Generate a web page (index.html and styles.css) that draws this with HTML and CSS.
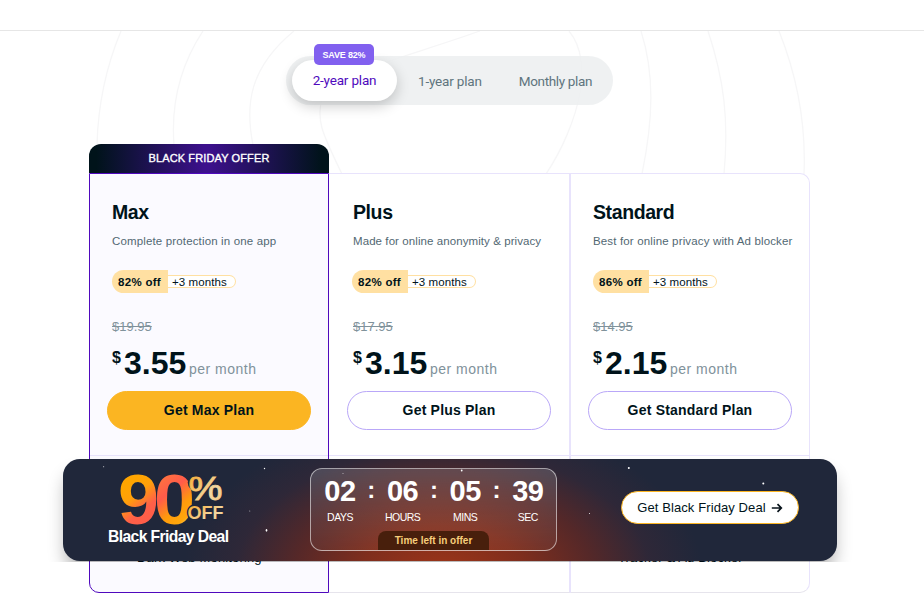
FILE: index.html
```html
<!DOCTYPE html>
<html lang="en">
<head>
<meta charset="utf-8">
<title>Plans</title>
<link rel="stylesheet" href="styles.css">
</head>
<body>
<header class="topbar"></header>
<main class="pricing">
  <svg class="waves" width="924" height="143" viewBox="0 31 924 143" fill="none" stroke="#f6f6f7" stroke-width="1.3">
    <path d="M121 31C106 67 98 105 97 145"/>
    <path d="M203 31C178 69 171 106 174 145"/>
    <path d="M294 31C249 68 245 105 253 145"/>
    <path d="M480 31C410 56 340 72 323 94C315 119 322 133 342 174"/>
    <path d="M569 31C583 48 583 70 580 93C575 120 562 150 546 174"/>
    <path d="M641 31C655 75 653 120 642 174"/>
    <path d="M708 31C724 79 729 120 724 174"/>
    <path d="M779 31C799 81 806 127 804 174"/>
  </svg>
  <nav class="tabs">
    <a class="tab tab-active"><span class="save">SAVE 82%</span>2-year plan</a>
    <a class="tab tab-year">1-year plan</a>
    <a class="tab tab-month">Monthly plan</a>
  </nav>
  <div class="ribbon">BLACK FRIDAY OFFER</div>
  <section class="plans">
    <article class="plan plan-max">
      <div class="offer">
        <h2>Max</h2>
        <p class="desc">Complete protection in one app</p>
        <div class="promo"><b>82% off</b><span>+3 months</span></div>
        <s>$19.95</s>
        <div class="price"><sup>$</sup><strong>3.55</strong><span>per month</span></div>
        <a class="buy buy-main">Get Max Plan</a>
      </div>
      <div class="features"><i></i><span>Dark Web Monitoring</span></div>
    </article>
    <article class="plan">
      <div class="offer">
        <h2>Plus</h2>
        <p class="desc">Made for online anonymity &amp; privacy</p>
        <div class="promo"><b>82% off</b><span>+3 months</span></div>
        <s>$17.95</s>
        <div class="price"><sup>$</sup><strong>3.15</strong><span>per month</span></div>
        <a class="buy">Get Plus Plan</a>
      </div>
    </article>
    <article class="plan plan-standard">
      <div class="offer">
        <h2>Standard</h2>
        <p class="desc">Best for online privacy with Ad blocker</p>
        <div class="promo"><b>86% off</b><span>+3 months</span></div>
        <s>$14.95</s>
        <div class="price"><sup>$</sup><strong>2.15</strong><span>per month</span></div>
        <a class="buy">Get Standard Plan</a>
      </div>
      <div class="features"><i></i><span>Tracker &amp; Ad Blocker</span></div>
    </article>
  </section>
</main>
<div class="banner-wrap">
  <aside class="banner">
    <svg class="deal" width="128" height="80" viewBox="0 0 128 80">
      <defs>
        <linearGradient id="nine" gradientUnits="userSpaceOnUse" x1="15" y1="15" x2="50" y2="58">
          <stop offset="0.1" stop-color="#ffa500"/><stop offset="0.32" stop-color="#ffa00a"/><stop offset="0.62" stop-color="#ff6048"/><stop offset="1" stop-color="#ff5a49"/>
        </linearGradient>
        <linearGradient id="zero" gradientUnits="userSpaceOnUse" x1="50" y1="15" x2="85" y2="57">
          <stop offset="0" stop-color="#ff7040"/><stop offset="0.28" stop-color="#ff5b4a"/><stop offset="0.6" stop-color="#ff9b0c"/><stop offset="0.82" stop-color="#ffa70b"/><stop offset="1" stop-color="#f5d88c"/>
        </linearGradient>
        <linearGradient id="gold" x1="0" y1="0" x2="1" y2="1">
          <stop offset="0" stop-color="#f9a622"/><stop offset="0.65" stop-color="#f3d7a2"/><stop offset="1" stop-color="#f5c67c"/>
        </linearGradient>
      </defs>
      <g font-family="Liberation Sans, sans-serif" font-weight="700">
        <text x="10" y="57" font-size="70" textLength="41" lengthAdjust="spacingAndGlyphs" fill="url(#nine)">9</text>
        <text x="46" y="57" font-size="70" textLength="41" lengthAdjust="spacingAndGlyphs" fill="url(#zero)">0</text>
        <circle cx="89" cy="15.5" r="9.3" fill="#20273a"/>
        <text x="80.5" y="32.5" font-size="34" textLength="34" lengthAdjust="spacingAndGlyphs" font-weight="400" fill="url(#gold)" stroke="url(#gold)" stroke-width=".8">%</text>
        <text x="79.5" y="52" font-size="19" textLength="36" lengthAdjust="spacingAndGlyphs" fill="url(#gold)" stroke="#20273a" stroke-width="3" paint-order="stroke">OFF</text>
        <text x="0" y="74.7" font-size="15.7" textLength="121" lengthAdjust="spacing" fill="#fff">Black Friday Deal</text>
      </g>
    </svg>
    <div class="timer">
      <div class="unit"><b>02</b><small>DAYS</small></div><em>:</em>
      <div class="unit"><b>06</b><small>HOURS</small></div><em>:</em>
      <div class="unit"><b>05</b><small>MINS</small></div><em>:</em>
      <div class="unit"><b>39</b><small>SEC</small></div>
      <div class="left">Time left in offer</div>
    </div>
    <a class="cta"><span>Get Black Friday Deal</span>
      <svg width="12" height="10" viewBox="0 0 12 10" fill="none" stroke="#08131b" stroke-width="1.7"><path d="M0.8 5H10M6.5 1.2L10.3 5L6.5 8.8"/></svg>
    </a>
    <svg class="stars" width="774" height="102" viewBox="63 459 774 102" fill="#fff">
      <circle cx="628.8" cy="468" r="1"/><circle cx="763.3" cy="483.5" r="1"/><circle cx="589.5" cy="513.5" r=".5"/>
      <circle cx="264.5" cy="468.5" r=".7"/><ellipse cx="266.5" cy="530.3" rx=".8" ry="1.4"/><circle cx="461.7" cy="470.5" r=".9"/>
      <circle cx="343" cy="473.5" r=".6" opacity=".6"/><circle cx="249.7" cy="511" r=".6" opacity=".6"/><circle cx="103.6" cy="466.7" r=".6" opacity=".6"/>
    </svg>
  </aside>
</div>
</body>
</html>
```
FILE: styles.css
```css
* { box-sizing: border-box; }
body {
  margin: 0;
  height: 596px;
  position: relative;
  overflow: hidden;
  background: #fff;
  color: #00131a;
  font-family: "Liberation Sans", Arial, sans-serif;
}
.topbar { height: 31px; border-bottom: 1px solid #e6e6e6; }
.pricing { position: relative; padding: 25px 0 0 89px; }
.waves { position: absolute; left: 0; top: 0; }
.tabs {
  position: relative;
  display: flex;
  align-items: center;
  width: 327px;
  height: 49px;
  margin-left: 197px;
  padding-left: 6px;
  border-radius: 25px;
  background: rgba(236, 238, 240, .85);
  font: 13.5px Roboto, sans-serif;
  color: #60757e;
}
.tab { position: relative; white-space: nowrap; letter-spacing: -.18px; }
.tab-active {
  width: 105px;
  height: 41px;
  line-height: 41px;
  text-align: center;
  border-radius: 21px;
  background: #fff;
  color: #4f09bd;
  box-shadow: 0 5px 14px rgba(0, 0, 0, .2);
}
.tab-year { margin-left: 21px; }
.tab-month { margin-left: 37px; letter-spacing: -.35px; }
.save {
  position: absolute;
  left: 22px;
  top: -16px;
  width: 60px;
  height: 21px;
  border-radius: 5px;
  background: #8160ef;
  color: #fff;
  font: bold 9px/22px "Liberation Sans", sans-serif;
}
.ribbon {
  position: relative;
  width: 240px;
  height: 29px;
  margin-top: 39px;
  border-radius: 12px 12px 0 0;
  background: linear-gradient(90deg, #00131a 3%, #3c108c 48%, #3c108c 50%, #00131a 97%);
  color: #fff;
  font-size: 11px;
  line-height: 29px;
  letter-spacing: .12px;
  text-align: center;
  -webkit-text-stroke: .35px #fff;
}
.plans {
  position: relative;
  display: grid;
  grid-template-columns: 240px 242px 239px;
  width: 721px;
  height: 420px;
}
.plan {
  border: 1px solid #e8e3fc;
  border-left: 0;
  border-right: 2px solid #e8e3fc;
  border-bottom-color: #e6e4ec;
  background: #fff;
}
.plan-max { border: 1px solid #4f09bd; border-radius: 0 0 0 10px; background: #fbfaff; }
.plan-standard { border-right-width: 1px; border-radius: 0 10px 10px 0; }
.offer {
  display: flex;
  flex-direction: column;
  height: 282px;
  padding: 26px 0 0 24px;
  border-bottom: 1px solid #e8e3fc;
}
.plan-max .offer,
.plan-standard .offer { padding-left: 22px; }
h2 { margin: 0; font-size: 19.5px; line-height: 25px; letter-spacing: -.4px; }
.desc { margin: 8px 0 21px; height: 16px; font-size: 11.5px; line-height: 16px; color: #526873; white-space: nowrap; letter-spacing: .15px; }
.plan:nth-child(2) .desc { letter-spacing: .08px; }
.promo { display: flex; align-items: center; height: 23px; font-size: 11.5px; white-space: nowrap; }
.promo b { height: 23px; width: 56px; padding-left: 6px; border-radius: 12px 0 0 12px; background: #ffe0a2; line-height: 24px; letter-spacing: .3px; }
.plan:nth-child(2) .promo { margin-left: -1px; }
.promo span { height: 13px; width: 68px; padding-left: 4px; border: 1px solid #ffe0a2; border-left: 0; border-radius: 0 7px 7px 0; background: #fff; line-height: 12px; letter-spacing: .1px; }
s { margin-top: 25px; height: 17px; font-size: 13px; line-height: 17px; color: #80929b; }
.price { display: flex; align-items: flex-start; height: 36px; margin-top: 9px; }
.price sup { width: 12px; font-size: 16px; font-weight: 700; line-height: 28px; vertical-align: top; }
.price strong { width: 65px; font-size: 32px; line-height: 38px; }
.price span { font-size: 14px; line-height: 51px; letter-spacing: .5px; color: #80929b; white-space: nowrap; }
.buy {
  width: 204px;
  height: 39px;
  margin: 11px 0 0 -5px;
  border: 1px solid #b9a7f8;
  border-radius: 20px;
  background: #fff;
  font-size: 14px;
  font-weight: 700;
  line-height: 37px;
  letter-spacing: .2px;
  text-align: center;
}
.plan:nth-child(2) .buy { margin-left: -6px; }
.buy-main { border-color: #fbb522; background: #fbb522; }
.features { display: flex; gap: 18px; padding: 94px 0 0 23px; font-size: 13px; line-height: 16px; white-space: nowrap; letter-spacing: .15px; }
.features i { width: 6px; height: 10px; border: solid #4f09bd; border-width: 0 2px 2px 0; transform: rotate(40deg); }

/* sticky offer bar laid over the plans */
.banner-wrap { position: absolute; left: 0; right: 0; top: 443px; height: 119px; padding: 16px 0 0 63px; overflow: hidden; }
.banner {
  position: relative;
  display: flex;
  width: 774px;
  height: 102px;
  padding-left: 45px;
  border-radius: 17px;
  background: radial-gradient(ellipse 260px 160px at 380px 118px, #a03618 0%, rgba(130, 46, 28, .97) 32%, rgba(92, 40, 38, .88) 58%, rgba(58, 40, 54, .55) 80%, rgba(32, 41, 58, 0) 100%), #20273a;
  box-shadow: 0 12px 18px -3px rgba(0, 0, 0, .32);
  color: #fff;
}
.deal { margin-top: 8px; overflow: visible; }
.stars { position: absolute; left: 0; top: 0; pointer-events: none; }
.timer {
  position: relative;
  display: flex;
  width: 247px;
  height: 83px;
  margin: 9px 0 0 74px;
  padding-left: 5px;
  border: 1px solid rgba(255, 255, 255, .55);
  border-radius: 12px;
  background: linear-gradient(rgba(255, 255, 255, .16), rgba(255, 255, 255, .04));
  overflow: hidden;
}
.unit { width: 48px; text-align: center; }
.unit b { display: block; margin-top: 4px; font-size: 29px; line-height: 36px; letter-spacing: -.5px; }
.unit small { display: block; font-size: 10.5px; line-height: 17px; letter-spacing: -.5px; }
.timer em { width: 14.6px; font-style: normal; font-weight: 700; font-size: 24px; line-height: 41px; text-align: center; }
.left {
  position: absolute;
  left: 67px;
  bottom: 0;
  width: 111px;
  height: 19px;
  border-radius: 8px 8px 0 0;
  background: #481f0c;
  color: #f6ce7b;
  font-size: 10px;
  font-weight: 700;
  line-height: 20px;
  letter-spacing: 0;
  text-align: center;
}
.cta {
  display: flex;
  align-items: center;
  justify-content: center;
  gap: 5px;
  width: 178px;
  height: 33px;
  margin: 32px 0 0 64px;
  border: 1px solid #fbb522;
  border-radius: 17px;
  background: #fff;
  color: #00131a;
  font-size: 13px;
  letter-spacing: .1px;
  white-space: nowrap;
}
```
